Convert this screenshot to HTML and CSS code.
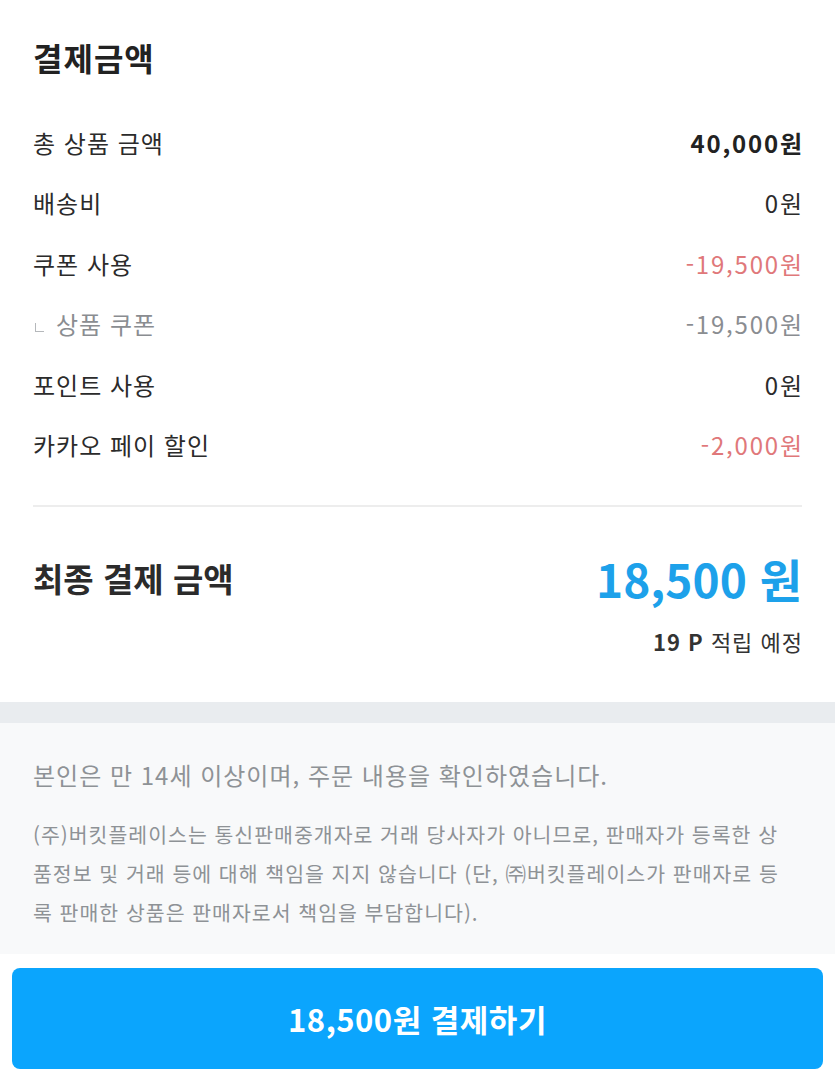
FILE: index.html
```html
<!DOCTYPE html>
<html lang="ko">
<head>
    <meta charset="UTF-8">
    <meta name="viewport" content="width=device-width, initial-scale=1.0">
    <title>결제금액</title>
    <link rel="stylesheet" href="styles.css">
</head>
<body>

    <div class="summary">
        <h2>결제금액</h2>

        <ul class="price-list">
            <li>
                <span>총 상품 금액</span>
                <span class="value strong">40,000원</span>
            </li>
            <li>
                <span>배송비</span>
                <span class="value">0원</span>
            </li>
            <li>
                <span>쿠폰 사용</span>
                <span class="value minus">-19,500원</span>
            </li>
            <li class="sub">
                <span><i class="corner"></i>상품 쿠폰</span>
                <span class="value">-19,500원</span>
            </li>
            <li>
                <span>포인트 사용</span>
                <span class="value">0원</span>
            </li>
            <li>
                <span>카카오 페이 할인</span>
                <span class="value minus">-2,000원</span>
            </li>
        </ul>

        <div class="total">
            <div class="total-row">
                <span class="total-label">최종 결제 금액</span>
                <span class="total-price">18,500 원</span>
            </div>
            <p class="point"><b>19 P</b> 적립 예정</p>
        </div>
    </div>

    <div class="notice">
        <p class="agree">본인은 만 14세 이상이며, 주문 내용을 확인하였습니다.</p>
        <p class="legal">(주)버킷플레이스는 통신판매중개자로 거래 당사자가 아니므로, 판매자가 등록한 상<br>품정보 및 거래 등에 대해 책임을 지지 않습니다 (단, ㈜버킷플레이스가 판매자로 등<br>록 판매한 상품은 판매자로서 책임을 부담합니다).</p>
    </div>

    <div class="pay">
        <button class="pay-btn">18,500원 결제하기</button>
    </div>

</body>
</html>
```

FILE: styles.css
```css
* {
    margin: 0;
    padding: 0;
    box-sizing: border-box;
}

body {
    font-family: "Noto Sans CJK KR", "Noto Sans", sans-serif;
    background-color: white;
    color: #2b2b2b;
}

.summary {
    padding: 37px 33px 46px;
}

.summary h2 {
    font-size: 32px;
    line-height: 40px;
    font-weight: 700;
    letter-spacing: 1px;
    color: #222;
    margin-bottom: 35px;
}

.price-list {
    list-style-type: none;
}

.price-list li {
    display: flex;
    justify-content: space-between;
    align-items: center;
    height: 60.5px;
    font-size: 24px;
    letter-spacing: 1px;
    color: #2b2b2b;
}

.price-list .value {
    letter-spacing: 1.8px;
    margin-right: -1.8px;
}

.price-list .strong {
    font-weight: 700;
    color: #222;
}

.price-list .minus {
    color: #e0787a;
}

.price-list .sub {
    color: #8a8d91;
}

.corner {
    display: inline-block;
    width: 9px;
    height: 9px;
    border-left: 1px solid #b5b8bb;
    border-bottom: 1px solid #b5b8bb;
    margin: 0 12px 0 2px;
    vertical-align: 2px;
}

.total {
    margin-top: 30px;
    border-top: 2px solid #ededed;
    padding-top: 43px;
}

.total-row {
    display: flex;
    justify-content: space-between;
    align-items: center;
    height: 56px;
}

.total-label {
    font-size: 33px;
    font-weight: 700;
    color: #2b2b2b;
}

.total-price {
    font-size: 46px;
    font-weight: 700;
    color: #1da1ea;
}

.point {
    margin-top: 20px;
    text-align: right;
    font-size: 22px;
    line-height: 30px;
    letter-spacing: 1px;
    margin-right: -1px;
    color: #333;
}

.point b {
    font-weight: 700;
}

.notice {
    background-color: #f8f9fa;
    border-top: 21px solid #e9ecef;
    padding: 36px 33px 22px;
    color: #8e9296;
}

.agree {
    font-size: 24px;
    line-height: 32px;
    letter-spacing: 1px;
    margin-bottom: 24px;
}

.legal {
    font-size: 20.5px;
    line-height: 39px;
    letter-spacing: 1px;
    white-space: nowrap;
}

.pay {
    padding: 14px 12px 3px;
}

.pay-btn {
    display: block;
    width: 100%;
    height: 101px;
    border: none;
    border-radius: 8px;
    background-color: #0ba5fd;
    color: white;
    font-family: inherit;
    font-size: 31px;
    font-weight: 700;
    letter-spacing: 0.5px;
    cursor: pointer;
}
```
